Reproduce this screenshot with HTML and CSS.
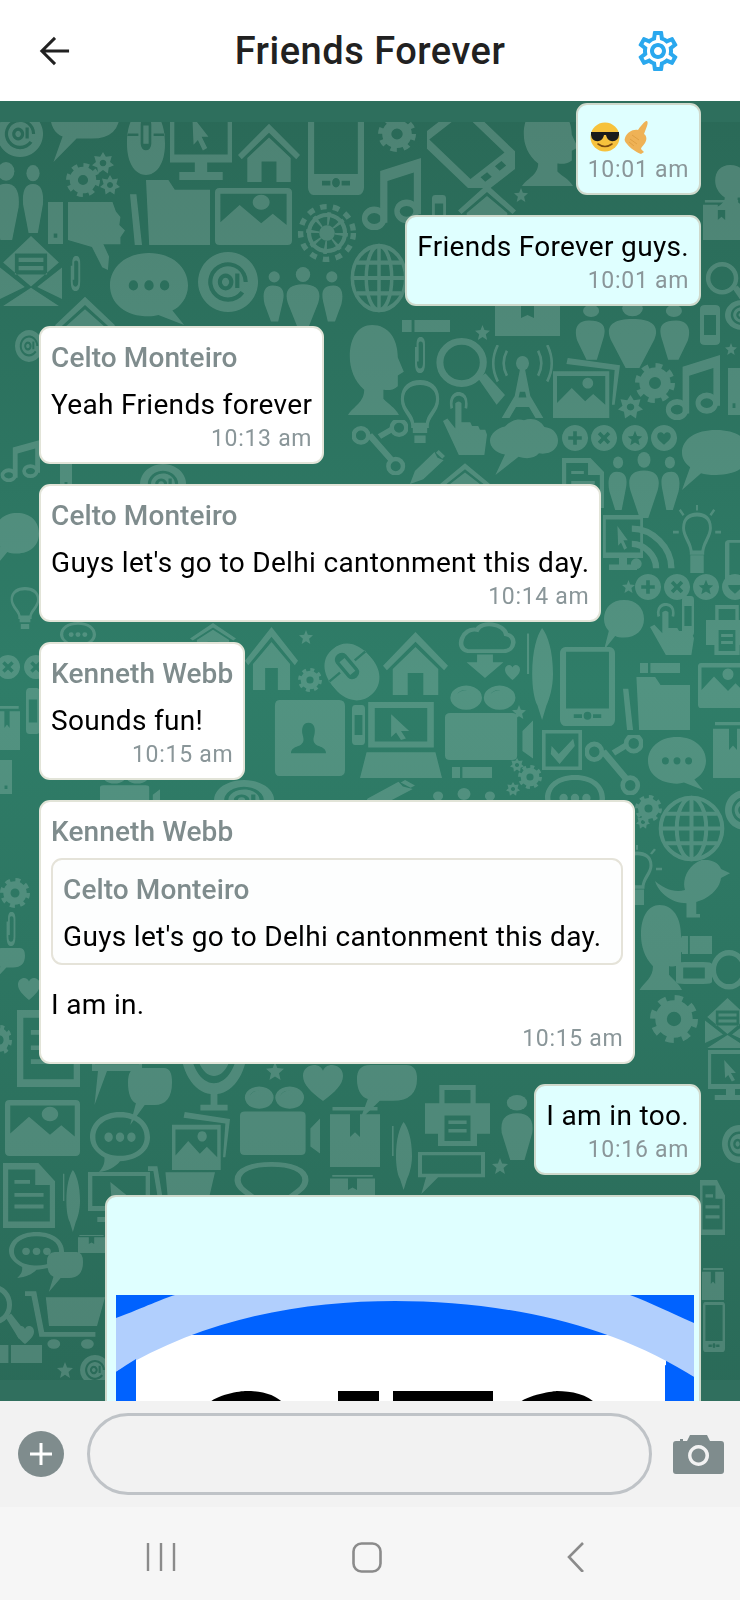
FILE: index.html
```html
<!DOCTYPE html>
<html lang="en">
<head>
<meta charset="utf-8">
<title>Friends Forever</title>
<link rel="stylesheet" href="styles.css">
</head>
<body>
<div class="app">
  <header class="topbar">
    <svg class="back" viewBox="0 0 34 32" aria-hidden="true"><path d="M32 16H3M17 2 3 16l14 14"/></svg>
    <h1 class="title">Friends Forever</h1>
    <svg class="settings" viewBox="0 0 24 24" aria-hidden="true"><path d="M19.43 12.98c.04-.32.07-.64.07-.98 0-.34-.03-.66-.07-.98l2.11-1.65c.19-.15.24-.42.12-.64l-2-3.46c-.09-.16-.26-.25-.44-.25-.06 0-.12.01-.17.03l-2.49 1c-.52-.4-1.08-.73-1.69-.98l-.38-2.65C14.46 2.18 14.25 2 14 2h-4c-.25 0-.46.18-.49.42l-.38 2.65c-.61.25-1.17.59-1.69.98l-2.49-1c-.06-.02-.12-.03-.18-.03-.17 0-.34.09-.43.25l-2 3.46c-.13.22-.07.49.12.64l2.11 1.65c-.04.32-.07.65-.07.98 0 .33.03.66.07.98l-2.11 1.65c-.19.15-.24.42-.12.64l2 3.46c.09.16.26.25.44.25.06 0 .12-.01.17-.03l2.49-1c.52.4 1.08.73 1.69.98l.38 2.65c.03.24.24.42.49.42h4c.25 0 .46-.18.49-.42l.38-2.65c.61-.25 1.17-.59 1.69-.98l2.49 1c.06.02.12.03.18.03.17 0 .34-.09.43-.25l2-3.46c.12-.22.07-.49-.12-.64l-2.11-1.65zm-1.98-1.71c.04.31.05.52.05.73 0 .21-.02.43-.05.73l-.14 1.13.89.7 1.08.84-.7 1.21-1.27-.51-1.04-.42-.9.68c-.43.32-.84.56-1.25.73l-1.06.43-.16 1.13-.2 1.35h-1.4l-.19-1.35-.16-1.13-1.06-.43c-.43-.18-.83-.41-1.23-.71l-.91-.7-1.06.43-1.27.51-.7-1.21 1.08-.84.89-.7-.14-1.13c-.03-.31-.05-.54-.05-.74s.02-.43.05-.73l.14-1.13-.89-.7-1.08-.84.7-1.21 1.27.51 1.04.42.9-.68c.43-.32.84-.56 1.25-.73l1.06-.43.16-1.13.2-1.35h1.39l.19 1.35.16 1.13 1.06.43c.43.18.83.41 1.23.71l.91.7 1.06-.43 1.27-.51.7 1.21-1.07.85-.89.7.14 1.13zM12 8c-2.21 0-4 1.79-4 4s1.79 4 4 4 4-1.79 4-4-1.79-4-4-4zm0 6c-1.1 0-2-.9-2-2s.9-2 2-2 2 .9 2 2-.9 2-2 2z"/></svg>
  </header>

  <main class="chat">
    <svg class="wallpaper" width="740" height="1300" viewBox="0 101 740 1300" aria-hidden="true">
      <defs>
        <linearGradient id="wall" x1="0" y1="0" x2="0" y2="1"><stop offset="0" stop-color="#2a6957"/><stop offset=".45" stop-color="#2f7d68"/><stop offset="1" stop-color="#2a6a58"/></linearGradient>
        <symbol id="house" viewBox="0 0 100 100" preserveAspectRatio="none"><path d="M50 3 100 55 94 62 50 18 6 62 0 55ZM50 26 85 60V100H62V66H38V100H15V60Z"/></symbol>
        <symbol id="phone" viewBox="0 0 100 100" preserveAspectRatio="none"><path fill-rule="evenodd" d="M10 0H90a10 8 0 0 1 10 8V92a10 8 0 0 1-10 8H10A10 8 0 0 1 0 92V8A10 8 0 0 1 10 0ZM11 6V78H89V6ZM25 85V90H40V85ZM60 85V90H75V85ZM43 87a7 5 0 1 0 14 0a7 5 0 1 0-14 0Z"/></symbol>
        <symbol id="monitor" viewBox="0 0 100 100" preserveAspectRatio="none"><path fill-rule="evenodd" d="M0 0H100V78H0ZM7 8V68H93V8ZM36 20 62 46 51 46 60 60 53 63 45 50 38 56ZM40 78H60V90H85V100H15V90H40Z"/></symbol>
        <symbol id="mouse" viewBox="0 0 100 100" preserveAspectRatio="none"><path fill-rule="evenodd" d="M50 0C80 0 100 18 100 52C100 85 75 100 50 100C25 100 0 85 0 52C0 18 20 0 50 0ZM36 22V52A14 10 0 0 0 64 52V22A14 10 0 0 0 36 22ZM43 24H57V52H43ZM0 36V40H30V36ZM70 36V40H100V36Z"/></symbol>
        <symbol id="gear" viewBox="0 0 100 100" preserveAspectRatio="none"><g fill="none" stroke="#fff"><circle cx="50" cy="50" r="27" stroke-width="24"/><circle cx="50" cy="50" r="43" stroke-width="14" stroke-dasharray="16.5 17.27"/></g></symbol>
        <symbol id="cog" viewBox="0 0 100 100" preserveAspectRatio="none"><g fill="none" stroke="#fff"><circle cx="50" cy="50" r="30" stroke-width="7"/><circle cx="50" cy="50" r="44" stroke-width="9" stroke-dasharray="11 10.6"/><circle cx="50" cy="50" r="13" fill="#fff" stroke="none"/><circle cx="50" cy="50" r="24" stroke-width="22" stroke-dasharray="4.5 14.3"/></g></symbol>
        <symbol id="star" viewBox="0 0 100 100" preserveAspectRatio="none"><path d="M50 0 63 34 100 38 72 62 81 100 50 80 19 100 28 62 0 38 37 34Z"/></symbol>
        <symbol id="stargear" viewBox="0 0 100 100" preserveAspectRatio="none"><path fill-rule="evenodd" d="M50 0 63 22 90 18 82 45 100 60 76 70 72 98 50 82 28 98 24 70 0 60 18 45 10 18 37 22ZM50 35a15 15 0 1 0 .1 0Z"/></symbol>
        <symbol id="heart" viewBox="0 0 100 100" preserveAspectRatio="none"><path d="M50 100C20 75 0 55 0 30C0 10 15 0 28 0C38 0 46 6 50 16C54 6 62 0 72 0C85 0 100 10 100 30C100 55 80 75 50 100Z"/></symbol>
        <symbol id="chatf" viewBox="0 0 100 100" preserveAspectRatio="none"><path d="M22 0H82Q100 0 100 25 100 65 60 65H38L5 100 18 62Q0 55 0 25 0 0 22 0Z"/></symbol>
        <symbol id="chatr" viewBox="0 0 100 100" preserveAspectRatio="none"><path d="M50 0C80 0 100 15 100 38C100 60 80 75 50 75C40 75 33 74 28 72L0 100 12 62C4 55 0 47 0 38C0 15 20 0 50 0Z"/></symbol>
        <symbol id="chatdots" viewBox="0 0 100 100" preserveAspectRatio="none"><path fill-rule="evenodd" d="M50 0C80 0 100 20 100 45C100 62 90 75 80 80L95 100 62 86C58 87 54 88 50 88C20 88 0 70 0 45C0 20 20 0 50 0ZM24 45a6 7 0 1 0 12 0a6 7 0 1 0-12 0ZM44 45a6 7 0 1 0 12 0a6 7 0 1 0-12 0ZM64 45a6 7 0 1 0 12 0a6 7 0 1 0-12 0Z"/></symbol>
        <symbol id="chato" viewBox="0 0 100 100" preserveAspectRatio="none"><path fill-rule="evenodd" d="M50 0C80 0 100 18 100 42C100 65 80 80 50 82C42 92 30 98 15 100C22 92 25 85 24 76C10 68 0 56 0 42C0 18 20 0 50 0ZM50 9C25 9 9 22 9 42C9 62 28 73 50 73C75 73 91 60 91 42C91 22 75 9 50 9ZM24 42a7 8 0 1 0 14 0a7 8 0 1 0-14 0ZM43 42a7 8 0 1 0 14 0a7 8 0 1 0-14 0ZM62 42a7 8 0 1 0 14 0a7 8 0 1 0-14 0Z"/></symbol>
        <symbol id="chatrect" viewBox="0 0 100 100" preserveAspectRatio="none"><path fill-rule="evenodd" d="M0 0H100V60H30L5 100 12 60H0ZM6 8V52H94V8Z"/></symbol>
        <symbol id="at" viewBox="0 0 100 100" preserveAspectRatio="none"><path fill-rule="evenodd" d="M50 0a50 50 0 1 0 .1 0ZM77 69A33 33 0 1 1 83 50H76A26 26 0 1 0 71 65ZM46 36a13 14 0 1 0 .1 0ZM46 43a6 7 0 1 1-.1 0ZM62 36H69V60H62Z"/></symbol>
        <symbol id="picture" viewBox="0 0 100 100" preserveAspectRatio="none"><path fill-rule="evenodd" d="M6 0H94Q100 0 100 8V92Q100 100 94 100H6Q0 100 0 92V8Q0 0 6 0ZM7 10V60L32 30 60 62 75 45 93 65V10ZM60 12a11 13 0 1 1-.1 0Z"/></symbol>
        <symbol id="picstack" viewBox="0 0 100 100" preserveAspectRatio="none"><path fill-rule="evenodd" d="M22 0 100 12 92 78 88 78 92 20 20 10ZM0 22H84V100H0ZM6 30V75L28 50 48 72 60 60 78 78V30ZM52 33a8 9 0 1 1-.1 0Z"/></symbol>
        <symbol id="folder" viewBox="0 0 100 100" preserveAspectRatio="none"><path d="M0 22H8L15 100H6ZM20 0H48L56 15H100V100H24Z"/></symbol>
        <symbol id="note" viewBox="0 0 100 100" preserveAspectRatio="none"><path d="M32 18 100 0V78H88V20L44 32V90H32Z"/><g fill="none" stroke="#fff" stroke-width="9"><ellipse cx="22" cy="84" rx="16" ry="12"/><ellipse cx="76" cy="74" rx="16" ry="12"/></g></symbol>
        <symbol id="tablet" viewBox="0 0 100 100" preserveAspectRatio="none"><g transform="rotate(-42 50 50)"><path fill-rule="evenodd" d="M22 -2H78Q86 -2 86 6V94Q86 102 78 102H22Q14 102 14 94V6Q14 -2 22 -2ZM24 8V78H76V8ZM34 84V92H44V84ZM56 84V92H66V84Z"/></g></symbol>
        <symbol id="bust" viewBox="0 0 100 100" preserveAspectRatio="none"><path d="M45 0C72 0 88 15 88 36L98 52 88 56V68C78 74 68 72 64 72V82C72 88 84 92 90 100H5C15 90 32 86 32 72C15 62 8 48 8 35C8 14 22 0 45 0Z"/></symbol>
        <symbol id="person" viewBox="0 0 100 100" preserveAspectRatio="none"><ellipse cx="50" cy="12" rx="30" ry="12"/><path d="M50 28C85 28 100 38 95 58L72 100H30L5 58C0 38 15 28 50 28Z"/></symbol>
        <symbol id="people" viewBox="0 0 100 100" preserveAspectRatio="none"><ellipse cx="14" cy="16" rx="7" ry="9"/><ellipse cx="50" cy="12" rx="9" ry="12"/><ellipse cx="86" cy="16" rx="7" ry="9"/><path d="M12 30C28 30 27 45 24 60L19 88H10L2 60C-1 44 1 30 12 30ZM50 28C70 28 73 42 69 58L56 100H44L31 58C27 42 30 28 50 28ZM88 30C99 30 101 44 98 60L90 88H81L76 60C73 45 72 30 88 30Z"/></symbol>
        <symbol id="envelope" viewBox="0 0 100 100" preserveAspectRatio="none"><path fill-rule="evenodd" d="M50 0 95 38 50 72 5 38ZM24 25V55H76V25ZM30 31H70V37H30ZM30 43H70V49H30Z"/><path d="M0 45 40 73 0 90ZM100 45 60 73 100 90ZM5 100 50 74 95 100Z"/></symbol>
        <symbol id="clip" viewBox="0 0 100 100" preserveAspectRatio="none"><path fill="none" stroke="#fff" stroke-width="13" d="M25 28V72Q25 94 50 94T75 72V22Q75 6 54 6T35 22V68"/></symbol>
        <symbol id="thumb" viewBox="0 0 100 100" preserveAspectRatio="none"><path d="M0 0H78L84 14 92 22 90 34 100 42 92 52 92 62H62L72 80 70 100 60 96 42 66 0 56Z"/></symbol>
        <symbol id="bar" viewBox="0 0 100 100" preserveAspectRatio="none"><path fill-rule="evenodd" d="M0 0H100V100H0ZM38 75V85H62V75Z"/></symbol>
        <symbol id="usb" viewBox="0 0 100 100" preserveAspectRatio="none"><path d="M0 0H20V100H0ZM26 0H100V100H26Z"/></symbol>
        <symbol id="pill" viewBox="0 0 100 100" preserveAspectRatio="none"><path fill-rule="evenodd" d="M25 0H75Q100 0 100 10V90Q100 100 75 100H25Q0 100 0 90V10Q0 0 25 0ZM20 25V75H80V25Z"/></symbol>
        <symbol id="pen" viewBox="0 0 100 100" preserveAspectRatio="none"><path d="M58 0C80 8 100 25 100 50 100 65 85 78 75 84L58 100 40 84C28 78 20 65 20 50 20 25 38 8 58 0Z"/><path d="M0 6H8V50H0Z"/></symbol>
        <symbol id="doc" viewBox="0 0 100 100" preserveAspectRatio="none"><path fill-rule="evenodd" d="M0 0H68L100 28V100H0ZM10 10V90H90V34H62V10ZM22 26H52V32H22ZM22 46H78V52H22ZM22 64H78V70H22Z"/></symbol>
        <symbol id="box" viewBox="0 0 100 100" preserveAspectRatio="none"><path fill-rule="evenodd" d="M5 0H95V6H5ZM0 12H100V100H0ZM40 12V50L50 42 60 50V12Z"/></symbol>
        <symbol id="cam" viewBox="0 0 100 100" preserveAspectRatio="none"><path fill-rule="evenodd" d="M24 2A18 16 0 1 0 24.100 2ZM12 16A12 11 0 0 1 26 8 14 12 0 0 0 12 16ZM62 2A18 16 0 1 0 62.100 2ZM50 16A12 11 0 0 1 64 8 14 12 0 0 0 50 16Z"/><path d="M6 38H76Q82 38 82 44V94Q82 100 76 100H6Q0 100 0 94V44Q0 38 6 38ZM88 62 100 48V98L88 88Z"/></symbol>
        <symbol id="printer" viewBox="0 0 100 100" preserveAspectRatio="none"><path fill-rule="evenodd" d="M22 0H78V30H100V80H80V100H20V80H0V30H22ZM30 8V30H70V8ZM30 50V92H70V50ZM36 58H64V64H36ZM36 72H64V78H36Z"/></symbol>
        <symbol id="mic" viewBox="0 0 100 100" preserveAspectRatio="none"><path d="M0 0H14C14 35 30 60 50 60 70 60 86 35 86 0H100C100 45 80 72 55 75V90H70V98H30V90H45V75C20 72 0 45 0 0Z"/><path d="M22 0H78C78 30 65 50 50 50 35 50 22 30 22 0Z"/></symbol>
        <symbol id="cart" viewBox="0 0 100 100" preserveAspectRatio="none"><path d="M0 2H14L24 70H88V78H18L8 10H0ZM26 12H100L90 60H30Z"/><circle cx="36" cy="90" r="8"/><circle cx="78" cy="90" r="8"/></symbol>
        <symbol id="bulb" viewBox="0 0 100 100" preserveAspectRatio="none"><path fill="none" stroke="#fff" stroke-width="8" d="M32 72C32 55 6 50 6 30 6 12 26 4 50 4S94 12 94 30C94 50 68 55 68 72Z"/><path d="M32 76H68V84H32ZM36 88H64V100H36Z"/></symbol>
        <symbol id="bulbr" viewBox="0 0 100 100" preserveAspectRatio="none"><path fill="none" stroke="#fff" stroke-width="6" d="M38 70C38 55 22 48 22 34 22 20 34 14 50 14S78 20 78 34C78 48 62 55 62 70Z"/><path d="M36 74H64V100H36ZM48 0H52V8H48ZM12 8 16 6 24 14 20 16ZM88 8 84 6 76 14 80 16ZM0 38H12V42H0ZM88 38H100V42H88Z"/></symbol>
        <symbol id="share" viewBox="0 0 100 100" preserveAspectRatio="none"><path d="M26 30 36 24 74 68 66 76ZM46 26 70 12 76 20 52 34Z"/><g fill="none" stroke="#fff" stroke-width="8"><circle cx="16" cy="28" r="13"/><circle cx="84" cy="14" r="13"/><circle cx="78" cy="84" r="13"/></g></symbol>
        <symbol id="cloudchat" viewBox="0 0 100 100" preserveAspectRatio="none"><path d="M22 15C30 5 40 0 50 4 62 -2 75 4 80 16 95 18 100 30 100 40 100 55 88 65 72 62 65 72 52 72 42 68L8 100 22 64C8 62 0 50 0 40 0 28 10 18 22 15Z"/></symbol>
        <symbol id="cplus" viewBox="0 0 100 100" preserveAspectRatio="none"><path fill-rule="evenodd" d="M50 0a50 50 0 1 0 .1 0ZM43 24H57V43H76V57H57V76H43V57H24V43H43Z"/></symbol>
        <symbol id="cx" viewBox="0 0 100 100" preserveAspectRatio="none"><path fill-rule="evenodd" d="M50 0a50 50 0 1 0 .1 0ZM36 26 50 40 64 26 74 36 60 50 74 64 64 74 50 60 36 74 26 64 40 50 26 36Z"/></symbol>
        <symbol id="cstar" viewBox="0 0 100 100" preserveAspectRatio="none"><path fill-rule="evenodd" d="M50 0a50 50 0 1 0 .1 0ZM50 22 58 42 78 44 63 57 68 78 50 67 32 78 37 57 22 44 42 42Z"/></symbol>
        <symbol id="cheart" viewBox="0 0 100 100" preserveAspectRatio="none"><path fill-rule="evenodd" d="M50 0a50 50 0 1 0 .1 0ZM50 76C34 62 24 54 24 42 24 32 32 28 38 28 44 28 48 32 50 37 52 32 56 28 62 28 68 28 76 32 76 42 76 54 66 62 50 76Z"/></symbol>
        <symbol id="globe" viewBox="0 0 100 100" preserveAspectRatio="none"><g fill="none" stroke="#fff" stroke-width="6"><circle cx="50" cy="50" r="46"/><ellipse cx="50" cy="50" rx="22" ry="46"/><path d="M50 4V96M12 28H88M12 72H88M4 50H96"/></g></symbol>
        <symbol id="magnifier" viewBox="0 0 100 100" preserveAspectRatio="none"><circle cx="38" cy="36" r="31" fill="none" stroke="#fff" stroke-width="10"/><path d="M62 60 72 52 100 84 88 98Z"/></symbol>
        <symbol id="tower" viewBox="0 0 100 100" preserveAspectRatio="none"><circle cx="50" cy="25" r="10"/><path d="M46 34H54L62 70 82 100H70L60 85H40L30 100H18L38 70ZM44 72H56L54 64H46Z"/><g fill="none" stroke="#fff" stroke-width="4"><path d="M26 8Q16 25 26 42M74 8Q84 25 74 42M12 0Q-2 25 12 50M88 0Q102 25 88 50"/></g></symbol>
        <symbol id="hand" viewBox="0 0 100 100" preserveAspectRatio="none"><path fill="none" stroke="#fff" stroke-width="6" d="M20 26C14 6 30 2 38 3S56 8 52 26"/><path d="M28 18Q36 12 42 18V48H62L66 54H80L84 60H96L100 68 94 100H36L0 46 10 42 28 58Z"/></symbol>
        <symbol id="pencil" viewBox="0 0 100 100" preserveAspectRatio="none"><path d="M0 100 14 62 70 6 78 22 96 30 38 86Z M82 0 100 18 92 26 74 8Z"/></symbol>
        <symbol id="wifi" viewBox="0 0 100 100" preserveAspectRatio="none"><g fill="none" stroke="#fff" stroke-width="14"><path d="M4 8C50 8 92 50 92 96"/><path d="M4 42C32 42 58 68 58 96"/></g><circle cx="14" cy="86" r="12"/></symbol>
        <symbol id="cloud" viewBox="0 0 100 100" preserveAspectRatio="none"><path fill="none" stroke="#fff" stroke-width="7" d="M24 52H78C96 52 98 24 82 22 78 2 45 -2 38 14 16 8 4 48 24 52Z"/><path d="M38 58H62V72H78L50 100 22 72H38Z"/></symbol>
        <symbol id="notebook" viewBox="0 0 100 100" preserveAspectRatio="none"><path fill-rule="evenodd" d="M10 0H92Q100 0 100 8V92Q100 100 92 100H10Q4 100 4 92V8Q4 0 10 0ZM50 30C42 30 40 38 42 46 44 52 44 56 38 60 32 62 26 64 26 70H74C74 64 68 62 62 60 56 56 56 52 58 46 60 38 58 30 50 30Z"/></symbol>
        <symbol id="laptop" viewBox="0 0 100 100" preserveAspectRatio="none"><path fill-rule="evenodd" d="M10 0H90V60H10ZM18 8V52H82V8ZM38 16 60 38 50 38 56 48 50 50 44 40 38 46ZM8 66H92L100 100H0Z"/></symbol>
        <symbol id="check" viewBox="0 0 100 100" preserveAspectRatio="none"><path fill-rule="evenodd" d="M0 0H100V100H0ZM9 9V91H91V9ZM24 40 42 60 78 22 82 40 44 85 22 60Z"/></symbol>
        <symbol id="bird" viewBox="0 0 100 100" preserveAspectRatio="none"><path d="M62 0C75 -2 85 5 88 15L100 22 88 30C86 50 70 65 55 70V90H60V96H42V72C22 72 5 55 0 35 12 48 26 55 40 50 36 35 42 10 62 0Z"/></symbol>
      </defs>
      <rect x="0" y="101" width="740" height="1300" fill="url(#wall)"/>
      <g class="icons">
        <use href="#at" x="-3" y="111" width="46" height="46"/>
        <use href="#chatf" x="50" y="95" width="70" height="67"/>
        <use href="#mouse" x="127" y="110" width="38" height="65"/>
        <use href="#monitor" x="170" y="100" width="62" height="80"/>
        <use href="#house" x="238" y="122" width="62" height="60"/>
        <use href="#phone" x="308" y="100" width="56" height="95"/>
        <use href="#gear" x="378" y="116" width="38" height="36"/>
        <use href="#tablet" x="427" y="112" width="88" height="76"/>
        <use href="#bust" x="519" y="106" width="60" height="80"/>
        <use href="#bust" x="712" y="165" width="40" height="45"/>
        <use href="#gear" x="66" y="163" width="34" height="34"/>
        <use href="#stargear" x="92" y="152" width="22" height="22"/>
        <use href="#stargear" x="100" y="175" width="20" height="20"/>
        <use href="#person" x="-8" y="162" width="28" height="78"/>
        <use href="#person" x="22" y="165" width="22" height="68"/>
        <use href="#bar" x="48" y="202" width="15" height="42"/>
        <use href="#thumb" x="68" y="202" width="57" height="68"/>
        <use href="#folder" x="130" y="180" width="80" height="65"/>
        <use href="#picture" x="215" y="188" width="77" height="57"/>
        <use href="#cog" x="297" y="203" width="60" height="60"/>
        <use href="#note" x="361" y="158" width="60" height="72"/>
        <use href="#globe" x="350" y="243" width="58" height="70"/>
        <use href="#envelope" x="0" y="236" width="62" height="70"/>
        <use href="#clip" x="68" y="256" width="15" height="35"/>
        <use href="#chatdots" x="110" y="253" width="78" height="72"/>
        <use href="#at" x="198" y="252" width="60" height="60"/>
        <use href="#people" x="263" y="267" width="80" height="62"/>
        <use href="#house" x="55" y="295" width="60" height="55"/>
        <use href="#house" x="458" y="183" width="58" height="50"/>
        <use href="#star" x="514" y="188" width="14" height="14"/>
        <use href="#pill" x="432" y="195" width="14" height="34"/>
        <use href="#box" x="703" y="200" width="37" height="40"/>
        <use href="#magnifier" x="705" y="262" width="45" height="45"/>
        <use href="#usb" x="402" y="320" width="48" height="12"/>
        <use href="#star" x="475" y="325" width="15" height="15"/>
        <use href="#box" x="495" y="300" width="65" height="36"/>
        <use href="#people" x="575" y="300" width="115" height="68"/>
        <use href="#pill" x="700" y="305" width="20" height="40"/>
        <use href="#at" x="725" y="300" width="34" height="30"/>
        <use href="#star" x="725" y="343" width="12" height="12"/>
        <use href="#bust" x="345" y="325" width="60" height="90"/>
        <use href="#clip" x="412" y="337" width="16" height="36"/>
        <use href="#magnifier" x="435" y="338" width="70" height="68"/>
        <use href="#tower" x="490" y="345" width="65" height="73"/>
        <use href="#picstack" x="553" y="358" width="67" height="60"/>
        <use href="#gear" x="635" y="363" width="40" height="40"/>
        <use href="#stargear" x="618" y="395" width="25" height="24"/>
        <use href="#note" x="665" y="355" width="55" height="65"/>
        <use href="#bar" x="728" y="368" width="12" height="47"/>
        <use href="#bulb" x="400" y="380" width="40" height="63"/>
        <use href="#hand" x="443" y="392" width="44" height="63"/>
        <use href="#cloudchat" x="490" y="418" width="68" height="57"/>
        <use href="#cplus" x="562" y="425" width="26" height="26"/>
        <use href="#cx" x="591" y="425" width="26" height="26"/>
        <use href="#cstar" x="622" y="425" width="26" height="26"/>
        <use href="#cheart" x="651" y="425" width="26" height="26"/>
        <use href="#chatr" x="682" y="430" width="68" height="60"/>
        <use href="#people" x="608" y="452" width="72" height="66"/>
        <use href="#share" x="352" y="420" width="56" height="55"/>
        <use href="#pencil" x="410" y="450" width="35" height="34"/>
        <use href="#doc" x="562" y="458" width="42" height="50"/>
        <use href="#house" x="440" y="462" width="50" height="40"/>
        <use href="#monitor" x="603" y="515" width="40" height="55"/>
        <use href="#bulbr" x="673" y="505" width="48" height="68"/>
        <use href="#wifi" x="630" y="525" width="45" height="45"/>
        <use href="#phone" x="725" y="540" width="40" height="45"/>
        <use href="#star" x="622" y="580" width="13" height="13"/>
        <use href="#cplus" x="635" y="574" width="26" height="26"/>
        <use href="#cx" x="664" y="574" width="26" height="26"/>
        <use href="#cstar" x="693" y="574" width="26" height="26"/>
        <use href="#cheart" x="722" y="574" width="26" height="26"/>
        <use href="#chatr" x="604" y="600" width="40" height="50"/>
        <use href="#hand" x="650" y="603" width="44" height="52"/>
        <use href="#pill" x="682" y="596" width="12" height="40"/>
        <use href="#printer" x="706" y="605" width="42" height="50"/>
        <use href="#house" x="245" y="625" width="53" height="65"/>
        <use href="#star" x="299" y="630" width="14" height="14"/>
        <use href="#gear" x="298" y="668" width="24" height="24"/>
        <use href="#mouse" x="328" y="642" width="48" height="60" transform="rotate(-40 352 672)"/>
        <use href="#house" x="383" y="630" width="65" height="65"/>
        <use href="#cloud" x="452" y="622" width="66" height="56"/>
        <use href="#heart" x="505" y="665" width="15" height="15"/>
        <use href="#pen" x="527" y="628" width="26" height="92"/>
        <use href="#phone" x="560" y="647" width="55" height="79"/>
        <use href="#usb" x="640" y="663" width="40" height="10"/>
        <use href="#folder" x="623" y="677" width="67" height="53"/>
        <use href="#picture" x="698" y="663" width="50" height="45"/>
        <use href="#notebook" x="272" y="700" width="73" height="76"/>
        <use href="#pill" x="352" y="705" width="13" height="40"/>
        <use href="#laptop" x="360" y="702" width="82" height="76"/>
        <use href="#cam" x="445" y="684" width="88" height="76"/>
        <use href="#star" x="512" y="705" width="14" height="14"/>
        <use href="#check" x="542" y="730" width="40" height="40"/>
        <use href="#share" x="585" y="735" width="58" height="60"/>
        <use href="#chatdots" x="648" y="737" width="58" height="53"/>
        <use href="#box" x="713" y="722" width="40" height="56"/>
        <use href="#stargear" x="510" y="758" width="14" height="14"/>
        <use href="#gear" x="518" y="765" width="24" height="24"/>
        <use href="#stargear" x="506" y="782" width="14" height="14"/>
        <use href="#usb" x="452" y="767" width="40" height="11"/>
        <use href="#pencil" x="360" y="780" width="55" height="30"/>
        <use href="#people" x="428" y="788" width="72" height="50"/>
        <use href="#chato" x="545" y="775" width="60" height="55"/>
        <use href="#gear" x="635" y="795" width="27" height="27"/>
        <use href="#globe" x="658" y="795" width="67" height="67"/>
        <use href="#at" x="725" y="790" width="40" height="40"/>
        <use href="#stargear" x="636" y="815" width="14" height="14"/>
        <use href="#bulbr" x="612" y="845" width="50" height="60"/>
        <use href="#bird" x="655" y="860" width="75" height="60"/>
        <use href="#bust" x="637" y="905" width="50" height="85"/>
        <use href="#usb" x="682" y="936" width="30" height="18"/>
        <use href="#pill" x="676" y="962" width="36" height="22"/>
        <use href="#magnifier" x="710" y="950" width="50" height="55"/>
        <use href="#gear" x="650" y="995" width="48" height="48"/>
        <use href="#envelope" x="705" y="998" width="45" height="50"/>
        <use href="#monitor" x="708" y="1050" width="45" height="50"/>
        <use href="#at" x="722" y="1125" width="34" height="38"/>
        <use href="#doc" x="17" y="1010" width="63" height="77"/>
        <use href="#chatrect" x="92" y="1020" width="50" height="85"/>
        <use href="#chatf" x="128" y="1068" width="44" height="57"/>
        <use href="#mic" x="180" y="1040" width="68" height="72"/>
        <use href="#star" x="266" y="1062" width="18" height="18"/>
        <use href="#heart" x="303" y="1065" width="40" height="36"/>
        <use href="#chatf" x="357" y="1065" width="60" height="55"/>
        <use href="#printer" x="425" y="1085" width="65" height="61"/>
        <use href="#person" x="500" y="1095" width="34" height="65"/>
        <use href="#picture" x="5" y="1100" width="75" height="56"/>
        <use href="#chato" x="90" y="1112" width="60" height="60"/>
        <use href="#picstack" x="172" y="1112" width="58" height="58"/>
        <use href="#cam" x="240" y="1085" width="80" height="70"/>
        <use href="#box" x="330" y="1107" width="50" height="60"/>
        <use href="#pen" x="392" y="1122" width="20" height="68"/>
        <use href="#chatrect" x="418" y="1152" width="67" height="42"/>
        <use href="#star" x="492" y="1158" width="16" height="16"/>
        <use href="#doc" x="3" y="1163" width="52" height="65"/>
        <use href="#pen" x="63" y="1170" width="17" height="62"/>
        <use href="#monitor" x="88" y="1172" width="62" height="50"/>
        <use href="#cart" x="148" y="1165" width="67" height="60"/>
        <use href="#bulb" x="233" y="1162" width="77" height="60"/>
        <use href="#box" x="330" y="1175" width="45" height="30"/>
        <use href="#chato" x="9" y="1232" width="55" height="46"/>
        <use href="#chatf" x="47" y="1252" width="36" height="40"/>
        <use href="#box" x="78" y="1235" width="27" height="18"/>
        <use href="#magnifier" x="-25" y="1285" width="50" height="55"/>
        <use href="#cart" x="25" y="1290" width="80" height="60"/>
        <use href="#heart" x="16" y="1326" width="18" height="18"/>
        <use href="#usb" x="0" y="1345" width="42" height="18"/>
        <use href="#star" x="57" y="1362" width="16" height="16"/>
        <use href="#at" x="80" y="1355" width="30" height="30"/>
        <use href="#doc" x="700" y="1180" width="25" height="55"/>
        <use href="#box" x="702" y="1268" width="22" height="32"/>
        <use href="#phone" x="703" y="1302" width="22" height="50"/>
        <use href="#at" x="15" y="330" width="28" height="32"/>
        <use href="#note" x="0" y="440" width="40" height="42"/>
        <use href="#chatr" x="-5" y="513" width="44" height="54"/>
        <use href="#bulb" x="10" y="587" width="30" height="42"/>
        <use href="#cx" x="-4" y="655" width="24" height="24"/>
        <use href="#cx" x="24" y="655" width="24" height="24"/>
        <use href="#pill" x="26" y="688" width="14" height="46"/>
        <use href="#box" x="-6" y="706" width="26" height="44"/>
        <use href="#bar" x="0" y="760" width="12" height="34"/>
        <use href="#gear" x="0" y="878" width="30" height="30"/>
        <use href="#clip" x="4" y="912" width="14" height="34"/>
        <use href="#chatf" x="-5" y="948" width="30" height="30"/>
        <use href="#heart" x="18" y="978" width="22" height="22"/>
        <use href="#gear" x="-12" y="1025" width="24" height="30"/>
        <use href="#bar" x="60" y="458" width="12" height="32"/>
        <use href="#at" x="140" y="464" width="46" height="40"/>
        <use href="#chato" x="60" y="622" width="36" height="30"/>
        <use href="#house" x="190" y="622" width="46" height="30"/>
        <use href="#cam" x="100" y="770" width="60" height="40"/>
        <use href="#at" x="214" y="780" width="60" height="40"/>
      </g>
      <rect x="0" y="101" width="740" height="21" fill="#2e6f5d"/>
      <rect x="0" y="1380" width="740" height="21" fill="#306f5e"/>
    </svg>

    <section class="messages">
      <article class="bubble sent">
        <svg class="emoji" viewBox="0 0 60 32" aria-hidden="true">
          <circle cx="15" cy="16" r="14.500" fill="#f7c23c"/>
          <path d="M1 11H29V14Q28 21 21 20 17 19 16 14H14Q13 19 9 20 2 21 1 14Z" fill="#1b1b1b"/>
          <path d="M8 23Q15 28 22 23" fill="none" stroke="#7a4a10" stroke-width="1.600" stroke-linecap="round"/>
          <path d="M35 17C37 11 43 8 48 9 50 6 53 2 56 0 58 0 58 2 57 5L54 13C57 15 57 19 55 22 53 25 51 26 51 28L54 31 51 33C46 31 40 27 37 23 35 21 34 19 35 17Z" fill="#efb256"/>
          <path d="M42 14 49 19M40 18 47 23M39 21 44 25" fill="none" stroke="#dc9c3e" stroke-width=".8"/>
        </svg>
        <time class="stamp">10:01 am</time>
      </article>
      <article class="bubble sent">
        <p class="body">Friends Forever guys.</p>
        <time class="stamp">10:01 am</time>
      </article>
      <article class="bubble">
        <h2 class="sender">Celto Monteiro</h2>
        <p class="body">Yeah Friends forever</p>
        <time class="stamp">10:13 am</time>
      </article>
      <article class="bubble">
        <h2 class="sender">Celto Monteiro</h2>
        <p class="body">Guys let's go to Delhi cantonment this day.</p>
        <time class="stamp">10:14 am</time>
      </article>
      <article class="bubble">
        <h2 class="sender">Kenneth Webb</h2>
        <p class="body">Sounds fun!</p>
        <time class="stamp">10:15 am</time>
      </article>
      <article class="bubble">
        <h2 class="sender quoted-sender">Kenneth Webb</h2>
        <blockquote class="quote">
          <h3 class="sender">Celto Monteiro</h3>
          <p class="body">Guys let's go to Delhi cantonment this day.</p>
        </blockquote>
        <p class="body after-quote">I am in.</p>
        <time class="stamp">10:15 am</time>
      </article>
      <article class="bubble sent">
        <p class="body">I am in too.</p>
        <time class="stamp">10:16 am</time>
      </article>
      <article class="bubble sent image-bubble">
        <svg class="shared-image" viewBox="0 0 578 110" aria-hidden="true">
          <rect width="578" height="110" fill="#0062ff"/>
          <rect x="20" y="40" width="530" height="70" fill="#fff"/>
          <path d="M0 23C30 12 45 4 59 0H514C535 8 555 18 578 28V82C490 26 380 6 279 6 190 6 90 22 0 77Z" fill="#b1cffd"/>
          <path d="M20 110V64Q10 70 0 77V110ZM549 110V70Q565 76 578 82V110Z" fill="#0062ff"/>
          <path d="M91 110C100 99 125 96 130 96 145 96 160 99 169 110Z"/>
          <path d="M222 96H263V110H222ZM277 96H377V110H277Z"/>
          <path d="M401 110C410 99 440 96 441 96 455 96 472 99 481 110Z"/>
        </svg>
      </article>
    </section>
  </main>

  <footer class="composer">
    <svg class="plus" viewBox="0 0 46 46" aria-hidden="true"><circle cx="23" cy="23" r="23"/><path d="M23 12V34M12 23H34"/></svg>
    <div class="field"></div>
    <svg class="camera" viewBox="0 0 51 40" aria-hidden="true"><path fill-rule="evenodd" d="M3 7H7V5H10V7H14L17 1H34L37 7H48Q51 7 51 10V37Q51 40 48 40H3Q0 40 0 37V10Q0 7 3 7ZM25.500 11a10.500 10.500 0 1 0 .1 0ZM25.500 14.500a7 7 0 1 1-.1 0Z"/></svg>
  </footer>

  <nav class="navbar">
    <svg class="nav-recent" viewBox="0 0 30 30" aria-hidden="true"><path d="M2 1V29M15 1V29M28 1V29"/></svg>
    <svg class="nav-home" viewBox="0 0 30 31" aria-hidden="true"><rect x="1.500" y="1.500" width="27" height="28" rx="8"/></svg>
    <svg class="nav-back" viewBox="0 0 18 30" aria-hidden="true"><path d="M16 1 2 15l14 15"/></svg>
  </nav>
</div>
</body>
</html>
```

FILE: styles.css
```css
* { box-sizing: border-box; }
html, body { margin: 0; padding: 0; }
body { font-family: Roboto, "Noto Sans", sans-serif; background: #f6f6f6; }

.app { width: 740px; height: 1600px; display: flex; flex-direction: column; overflow: hidden; }

.topbar { height: 101px; flex: none; background: #fff; display: grid; grid-template-columns: 1fr auto 1fr; align-items: center; padding: 0 39px; }
.back { width: 32px; height: 30px; fill: none; stroke: #212121; stroke-width: 3.2; }
.title { margin: 0; font-size: 38px; font-weight: 500; letter-spacing: .5px; color: #212121; }
.settings { width: 48px; height: 48px; fill: #2aa8ee; justify-self: end; margin-right: 19px; }

.chat { position: relative; flex: none; height: 1300px; overflow: hidden; background: #2c6f5c; }
.wallpaper { position: absolute; inset: 0; display: block; filter: blur(.5px); }
.icons { fill: #fff; opacity: .17; }

.messages { position: relative; display: flex; flex-direction: column; align-items: flex-start; gap: 20px; padding: 2px 39px 0; }

.bubble { background: #fff; border: 2px solid #e2e4d8; border-radius: 11px; padding: 13px 10px 6px; display: flex; flex-direction: column; }
.bubble.sent { align-self: flex-end; background: #dfffff; border-color: #cfd9cc; }

.sender { margin: 0 0 13px; font-size: 28px; line-height: 34px; font-weight: 500; letter-spacing: .1px; color: #7f8c8d; }
.quoted-sender { margin-bottom: 9px; }
.body { margin: 0; font-size: 28px; line-height: 34px; color: #000; letter-spacing: .33px; white-space: nowrap; }
.stamp { align-self: flex-end; font-size: 23px; line-height: 34px; color: #8a9699; letter-spacing: .7px; }
.emoji { width: 60px; height: 32px; margin: 3px 0 0 2px; display: block; overflow: visible; }

.quote { margin: 0; padding: 13px 20px 9px 10px; background: #fdfefe; border: 2px solid #e5e3d9; border-radius: 11px; }
.after-quote { margin-top: 23px; }

.image-bubble { width: 596px; height: 240px; padding: 98px 4px 0 9px; }
.shared-image { width: 578px; height: 110px; display: block; }

.composer { height: 106px; flex: none; background: #f2f2f2; display: flex; align-items: flex-start; padding: 12px 16px 0 18px; }
.plus { width: 46px; height: 46px; margin-top: 18px; flex: none; fill: #7f8c8d; stroke: #fff; stroke-width: 3; }
.plus circle { stroke: none; }
.field { width: 565px; height: 82px; margin-left: 23px; flex: none; border: 3px solid #bfc3c7; border-radius: 41px; background: #f2f2f2; }
.camera { width: 51px; height: 40px; margin: 21px 0 0 21px; flex: none; fill: #7f8c8d; }

.navbar { flex: 1; background: #f6f6f6; position: relative; display: flex; align-items: flex-start; padding: 35px 0 0 146px; }
.nav-recent { width: 30px; height: 30px; fill: none; stroke: #8b8b8b; stroke-width: 2.4; }
.nav-home { width: 30px; height: 31px; margin-left: 176px; fill: none; stroke: #8b8b8b; stroke-width: 2.6; }
.nav-back { width: 18px; height: 30px; margin-left: 185px; fill: none; stroke: #8b8b8b; stroke-width: 2.6; }
```
